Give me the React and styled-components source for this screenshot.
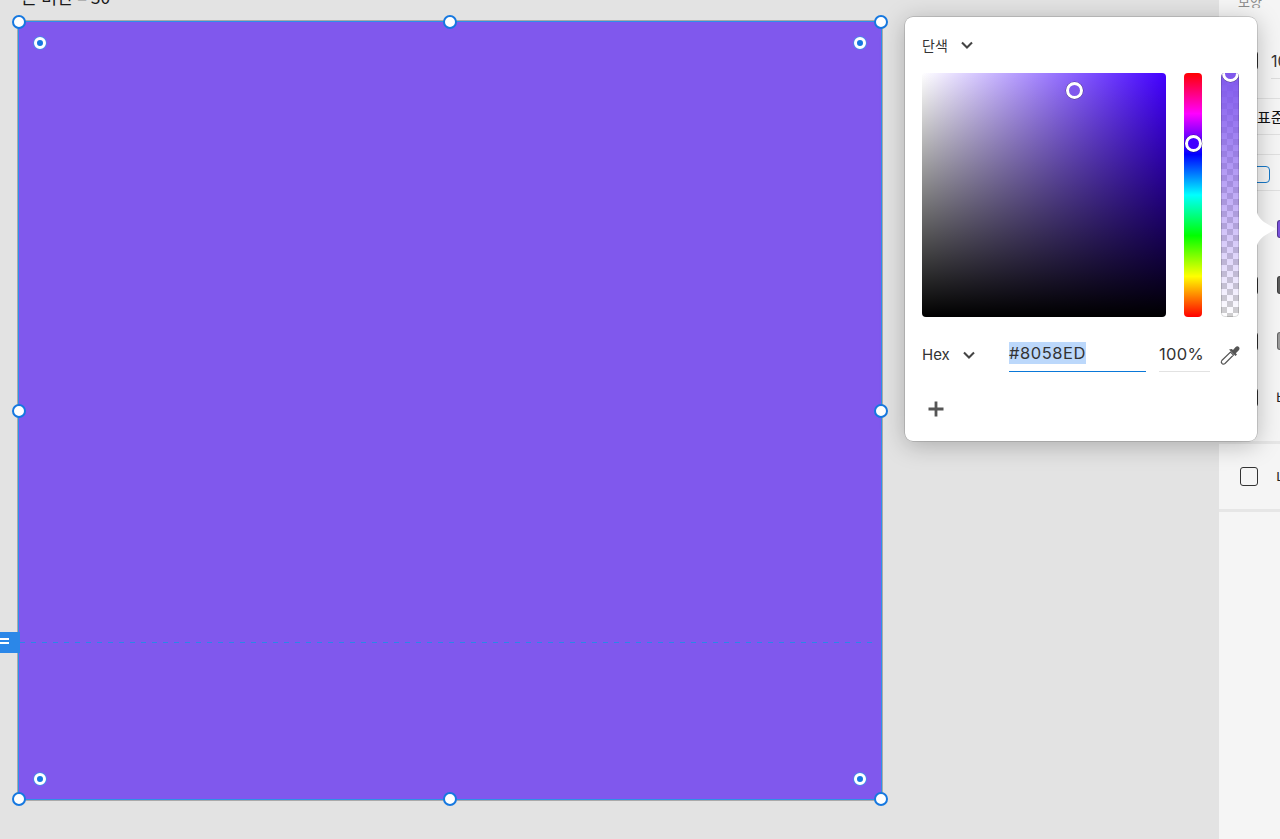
import React from 'react';
import styled, { createGlobalStyle } from 'styled-components';

const GlobalStyle = createGlobalStyle`
  html, body {
    margin: 0;
    padding: 0;
    height: 100%;
    overflow: hidden;
  }
  #root {
    height: 100%;
  }
  body {
    font-family: Inter, "Noto Sans CJK KR", sans-serif;
    color: #333;
  }
`;

const Page = styled.div`
  position: relative;
  display: flex;
  width: 1280px;
  height: 839px;
  overflow: hidden;
  background: #e3e3e3;
`;

const Canvas = styled.div`
  position: relative;
  flex: 1;
`;

const FrameLabel = styled.div`
  position: absolute;
  left: 21px;
  top: -13px;
  font-size: 17.5px;
  line-height: 20px;
  color: #1a1a1a;
  white-space: nowrap;
  font-family: "Noto Sans CJK KR", sans-serif;
`;

const Shape = styled.div`
  position: absolute;
  left: 18px;
  top: 21px;
  width: 862px;
  height: 777px;
  background: #8058ed;
  border: 1px solid #2f8fe8;
  box-shadow: 0 0 0 1px rgba(100, 100, 100, 0.45);
`;

const Guide = styled.div`
  position: absolute;
  left: 20px;
  top: 642px;
  width: 856px;
  height: 1px;
  background: repeating-linear-gradient(to right, #2b87e8 0 5px, transparent 5px 11px);
`;

const GuideTag = styled.div`
  position: absolute;
  left: 0;
  top: 632px;
  width: 20px;
  height: 21px;
  box-sizing: border-box;
  padding-bottom: 3px;
  background: #2b87e8;
  display: flex;
  flex-direction: column;
  justify-content: center;
  gap: 2.5px;
`;

const GuideTagLine = styled.span`
  display: block;
  width: 9px;
  height: 1.5px;
  background: #fff;
`;

const Handle = styled.span`
  position: absolute;
  left: ${({ $x }) => $x - 7}px;
  top: ${({ $y }) => $y - 7}px;
  width: 14px;
  height: 14px;
  box-sizing: border-box;
  border-radius: 50%;
  background: #fff;
  border: 2px solid #1678e0;
`;

const RadiusHandle = styled.span`
  position: absolute;
  left: ${({ $x }) => $x - 6}px;
  top: ${({ $y }) => $y - 6}px;
  width: 12px;
  height: 12px;
  box-sizing: border-box;
  border-radius: 50%;
  background: #1678e0;
  border: 3.5px solid #fff;
  box-shadow: 0 0 0 0.75px #3f94e8;
`;

const Panel = styled.aside`
  width: 61px;
  flex-shrink: 0;
  background: #f5f5f5;
  overflow: hidden;
  display: flex;
  flex-direction: column;
  font-family: "Noto Sans CJK KR", sans-serif;
  font-size: 14px;
`;

const PanelHead = styled.div`
  height: 99px;
  box-sizing: border-box;
  border-bottom: 1px solid #e0e0e0;
  font-size: 13px;
  color: #8a8a8a;
`;

const PanelTitle = styled.div`
  height: 11px;
  margin-top: -3px;
  padding-left: 19px;
  overflow: hidden;
  white-space: nowrap;
  line-height: 9px;
`;

const SizeRow = styled.div`
  display: flex;
  align-items: center;
  gap: 13px;
  margin-top: 43px;
  height: 19px;
  padding-left: 21px;
  color: #333;
  font-size: 16px;
  font-family: Inter, sans-serif;
  white-space: nowrap;
`;

const RowBox = styled.span`
  flex-shrink: 0;
  width: 18px;
  height: 19px;
  box-sizing: border-box;
  border: 1.5px solid #333;
  border-radius: 3px;
`;

const Rule = styled.div`
  height: 1px;
  margin: 8px 0 0 52px;
  background: #ddd;
`;

const ModeRow = styled.div`
  height: 36px;
  box-sizing: border-box;
  padding-left: 38px;
  display: flex;
  align-items: center;
  border-bottom: 1px solid #e0e0e0;
  color: #111;
  font-size: 15px;
  white-space: nowrap;
`;

const EmptyRow = styled.div`
  height: 20px;
  box-sizing: border-box;
  border-bottom: 1px solid #e0e0e0;
`;

const AlignRow = styled.div`
  height: 36px;
  box-sizing: border-box;
  padding: 11px 0 0 21px;
  border-bottom: 1px solid #e0e0e0;
`;

const BlueBox = styled.span`
  display: block;
  width: 30px;
  height: 17px;
  box-sizing: border-box;
  border: 1.5px solid #1678c8;
  border-radius: 4px;
`;

const FillGroup = styled.div`
  height: 253px;
  box-sizing: border-box;
  padding-top: 10px;
  display: flex;
  flex-direction: column;
  border-bottom: 3px solid #e6e6e6;
`;

const FillRow = styled.div`
  height: 56px;
  flex-shrink: 0;
  display: flex;
  align-items: center;
  gap: ${({ $gap }) => $gap}px;
  padding-left: 21px;
  white-space: nowrap;
  color: #222;
  font-size: 15px;
`;

const Swatch = styled.span`
  flex-shrink: 0;
  width: 18px;
  height: 18px;
  box-sizing: border-box;
  border-radius: 3px;
  background: ${({ $color }) => $color};
  border: 1px solid rgba(0, 0, 0, 0.35);
`;

const CheckRow = styled.div`
  height: 68px;
  box-sizing: border-box;
  padding-left: 21px;
  display: flex;
  align-items: center;
  gap: 18px;
  border-bottom: 3px solid #e6e6e6;
  white-space: nowrap;
  font-size: 15px;
  color: #222;
`;

const Popover = styled.div`
  position: absolute;
  left: 905px;
  top: 17px;
  width: 352px;
  height: 424px;
  box-sizing: border-box;
  padding: 16px 17px 0;
  background: #fff;
  border-radius: 8px;
  box-shadow: 0 0 0 0.5px rgba(0, 0, 0, 0.25), 0 4px 24px rgba(0, 0, 0, 0.25);
`;

const PopArrow = styled.svg`
  position: absolute;
  left: 351px;
  top: 190px;
`;

const TypeSelect = styled.div`
  display: flex;
  align-items: center;
  gap: 12px;
  height: 24px;
  font-size: 14px;
  color: #333;
  font-family: "Noto Sans CJK KR", sans-serif;
`;

const Pickers = styled.div`
  display: flex;
  margin-top: 16px;
`;

const SatBox = styled.div`
  position: relative;
  width: 244px;
  height: 244px;
  border-radius: 4px;
  background:
    linear-gradient(to bottom, rgba(0, 0, 0, 0), #000),
    linear-gradient(to right, #fff, #4200ff);
`;

const Cursor = styled.span`
  position: absolute;
  left: ${({ $x }) => $x}px;
  top: ${({ $y }) => $y}px;
  width: 17px;
  height: 17px;
  box-sizing: border-box;
  margin: -8.5px 0 0 -8.5px;
  border-radius: 50%;
  border: 3px solid #fff;
  background: ${({ $color }) => $color};
  box-shadow: 0 0 0 0.5px rgba(0, 0, 0, 0.4);
`;

const HueBar = styled.div`
  position: relative;
  width: 18px;
  height: 244px;
  margin-left: 18px;
  border-radius: 4px;
  background: linear-gradient(
    to bottom,
    #f00 0%,
    #f0f 16.67%,
    #00f 33.33%,
    #0ff 50%,
    #0f0 66.67%,
    #ff0 83.33%,
    #f00 100%
  );
`;

const AlphaBar = styled.div`
  position: relative;
  width: 18px;
  height: 244px;
  margin-left: 19px;
  border-radius: 4px;
  overflow: hidden;
  background:
    linear-gradient(to bottom, #8058ed, rgba(128, 88, 237, 0)),
    repeating-conic-gradient(#cfcfcf 0% 25%, #fff 0% 50%) 0 0 / 12px 12px;
  box-shadow: inset 0 0 0 1px rgba(0, 0, 0, 0.14);
`;

const ValueRow = styled.div`
  display: flex;
  align-items: center;
  margin-top: 17px;
  height: 45px;
`;

const FormatSelect = styled.div`
  width: 87px;
  flex-shrink: 0;
  display: flex;
  align-items: center;
  gap: 12px;
  font-size: 15px;
  color: #333;
  padding-bottom: 4px;
`;

const HexField = styled.div`
  width: 137px;
  height: 30px;
  flex-shrink: 0;
  border-bottom: 1px solid #0a78d8;
`;

const HexText = styled.span`
  display: inline-block;
  height: 22px;
  margin-top: 1px;
  line-height: 22px;
  font-size: 16.5px;
  letter-spacing: 0.55px;
  color: #333;
  background: #bcd8fb;
`;

const AlphaField = styled.div`
  width: 51px;
  height: 30px;
  flex-shrink: 0;
  margin-left: 13px;
  border-bottom: 1px solid #e2e2e2;
  line-height: 26px;
  font-size: 16.5px;
  letter-spacing: 0.3px;
  color: #333;
`;

const Dropper = styled.svg`
  margin: 0 0 6px 9px;
  flex-shrink: 0;
`;

const AddButton = styled.div`
  margin-top: 18px;
  height: 24px;
  width: 28px;
  display: flex;
  align-items: center;
  justify-content: center;
`;

const Chevron = ({ size = 14 }) => (
  <svg width={size} height={size} viewBox="0 0 14 14" fill="none">
    <path d="M2 4.500 7 9.500 12 4.500" stroke="#444" strokeWidth="2.100" />
  </svg>
);

const bigHandles = [
  [19, 22], [450, 22], [880.5, 22],
  [19, 411], [880.5, 411],
  [19, 799], [450, 799], [880.5, 799],
];

const cornerHandles = [
  [40, 43], [860, 43], [40, 779], [860, 779],
];

export default function App() {
  return (
    <Page>
      <GlobalStyle />
      <Canvas>
        <FrameLabel>큰 미만 = 30</FrameLabel>
        <Shape />
        <Guide />
        <GuideTag>
          <GuideTagLine />
          <GuideTagLine />
        </GuideTag>
        {bigHandles.map(([x, y]) => (
          <Handle key={`${x}-${y}`} $x={x} $y={y} />
        ))}
        {cornerHandles.map(([x, y]) => (
          <RadiusHandle key={`${x}-${y}`} $x={x} $y={y} />
        ))}
      </Canvas>

      <Panel>
        <PanelHead>
          <PanelTitle>모양</PanelTitle>
          <SizeRow>
            <RowBox />
            <span>100</span>
          </SizeRow>
          <Rule />
        </PanelHead>
        <ModeRow>표준</ModeRow>
        <EmptyRow />
        <AlignRow>
          <BlueBox />
        </AlignRow>
        <FillGroup>
          <FillRow $gap={19}>
            <RowBox />
            <Swatch $color="#7a52dc" />
          </FillRow>
          <FillRow $gap={19}>
            <RowBox />
            <Swatch $color="#5c5c5c" />
          </FillRow>
          <FillRow $gap={19}>
            <RowBox />
            <Swatch $color="#9a9a9a" />
          </FillRow>
          <FillRow $gap={18}>
            <RowBox />
            <span>바깥</span>
          </FillRow>
        </FillGroup>
        <CheckRow>
          <RowBox />
          <span>내부</span>
        </CheckRow>
      </Panel>

      <Popover>
        <PopArrow width="22" height="44" viewBox="0 0 22 44">
          <path d="M0 0C1 8 3 11 8 15L20 22 8 29C3 33 1 36 0 44Z" fill="#fff" />
        </PopArrow>
        <TypeSelect>
          단색
          <Chevron />
        </TypeSelect>
        <Pickers>
          <SatBox>
            <Cursor $x={152} $y={17} $color="#8058ed" />
          </SatBox>
          <HueBar>
            <Cursor $x={9} $y={70} $color="#4200ff" />
          </HueBar>
          <AlphaBar>
            <Cursor $x={9} $y={0} $color="#8058ed" />
          </AlphaBar>
        </Pickers>
        <ValueRow>
          <FormatSelect>
            Hex
            <Chevron />
          </FormatSelect>
          <HexField>
            <HexText>#8058ED</HexText>
          </HexField>
          <AlphaField>100%</AlphaField>
          <Dropper width="22" height="22" viewBox="0 0 22 22" fill="none">
            <path d="M3 20.500c-1-1-1-2-.2-3L11.500 9l3 3-8.500 8.500c-1 .8-2.300 1-3 0Z" stroke="#555" strokeWidth="1.2" fill="#fff" />
            <path d="M10 6.500l6.500 6.500 1.500-1.500-1.200-1.200 2.800-2.800c1.200-1.200 1.200-2.600.3-3.500s-2.300-.9-3.500.3L14 7.100l-1.200-1.200Z" fill="#555" />
          </Dropper>
        </ValueRow>
        <AddButton>
          <svg width="16" height="16" viewBox="0 0 16 16" fill="none">
            <path d="M8 .5v15M.5 8h15" stroke="#555" strokeWidth="2.800" />
          </svg>
        </AddButton>
      </Popover>
    </Page>
  );
}
